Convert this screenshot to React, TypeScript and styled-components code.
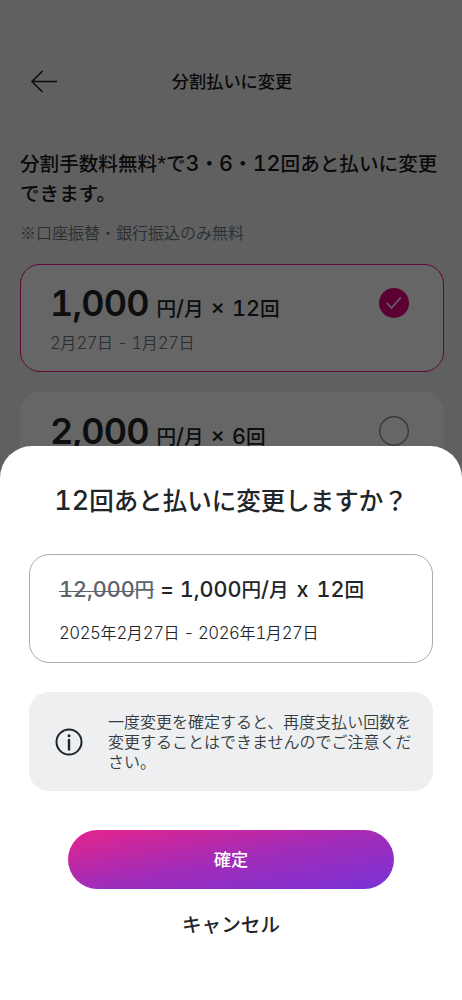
import React from "react";
import styled, { createGlobalStyle } from "styled-components";

const GlobalStyle = createGlobalStyle`
  * { box-sizing: border-box; }
  body {
    margin: 0;
    font-family: "Noto Sans CJK JP", sans-serif;
    color: #212529;
    background: #f0f0f0;
  }
  h1, h2, p { margin: 0; }
  button { font-family: inherit; border: 0; padding: 0; background: none; cursor: pointer; }
`;

const Screen = styled.div`
  position: relative;
  width: 462px;
  height: 1000px;
  overflow: hidden;
  background: #f0f0f0;
`;

const Latin = styled.span<{ $light?: boolean }>`
  font-family: Inter, sans-serif;
  font-size: ${(p) => (p.$light ? "1.05em" : "1.1em")};
  font-weight: ${(p) => (p.$light ? 350 : 550)};
  letter-spacing: ${(p) => (p.$light ? "-0.5px" : "0")};
  line-height: 1;
  font-variant-numeric: tabular-nums;
`;

const Header = styled.header`
  display: grid;
  grid-template-columns: 30px 1fr 28px;
  align-items: center;
  height: 58px;
  margin-top: 52px;
  padding: 0 29px;
`;

const BackButton = styled.button`
  display: flex;
`;

const ScreenTitle = styled.h1`
  padding-bottom: 1px;
  text-align: center;
  font-size: 17.2px;
  font-weight: 500;
  line-height: 24px;
  color: #1a1a1a;
`;

const Content = styled.main`
  padding: 38px 18.5px 0 20px;
`;

const Heading = styled.h2`
  font-size: 19.6px;
  line-height: 30px;
  font-weight: 500;
  color: #1a1a1a;
  white-space: nowrap;
`;

const Asterisk = styled.span`
  font-family: "Liberation Sans", sans-serif;
  font-size: 1.15em;
  line-height: 1;
`;

const Note = styled.p`
  margin-top: 12px;
  font-size: 16px;
  line-height: 24px;
  font-weight: 350;
  color: #6c757d;
`;

const PlanList = styled.div`
  display: flex;
  flex-direction: column;
  gap: 20px;
  margin-top: 20px;
`;

const PlanCard = styled.div<{ $selected?: boolean }>`
  display: flex;
  justify-content: space-between;
  align-items: flex-start;
  height: 108px;
  padding: 20px 33.5px 0 29px;
  border: 1px solid ${(p) => (p.$selected ? "#e8148a" : "#fff")};
  border-radius: 20px;
  background: #fff;
`;

const PlanPrice = styled.div`
  display: flex;
  align-items: baseline;
  height: 40px;
  line-height: 40px;
  white-space: nowrap;
`;

const Amount = styled.span`
  width: 106.5px;
  font-family: Inter, sans-serif;
  font-variant-numeric: tabular-nums;
  font-size: 36px;
  font-weight: 580;
  letter-spacing: -0.8px;
  line-height: 36px;
`;

const Unit = styled.span`
  font-size: 19.6px;
  font-weight: 500;
  word-spacing: 1.4px;
`;

const Period = styled.p`
  margin-top: 5px;
  font-size: 16px;
  line-height: 24px;
  font-weight: 350;
  color: #6c757d;
`;

const Radio = styled.span<{ $selected?: boolean }>`
  display: flex;
  align-items: center;
  justify-content: center;
  width: 30px;
  height: 30px;
  margin-top: 3px;
  border-radius: 50%;
  box-shadow: ${(p) => (p.$selected ? "none" : "inset 0 0 0 1.4px #868e96")};
  background: ${(p) => (p.$selected ? "#e60082" : "transparent")};
`;

const Overlay = styled.div`
  position: absolute;
  inset: 0;
  display: flex;
  flex-direction: column;
  justify-content: flex-end;
  background: rgba(0, 0, 0, 0.6);
`;

const Sheet = styled.section`
  display: flex;
  flex-direction: column;
  align-items: center;
  height: 554px;
  padding: 36px 29px 0;
  border-radius: 32px 32px 0 0;
  background: #fff;
`;

const SheetTitle = styled.h2`
  font-size: 24.5px;
  line-height: 36px;
  font-weight: 500;
  white-space: nowrap;
`;

const Summary = styled.div`
  width: 404px;
  height: 109px;
  margin-top: 36px;
  padding: 19px 29px 0;
  border: 1px solid #a5adb3;
  border-radius: 20px;
  white-space: nowrap;
`;

const SummaryPrice = styled.p`
  font-size: 19.6px;
  line-height: 30px;
  font-weight: 500;
`;

const OldPrice = styled.s`
  color: #5c656d;
  text-decoration-thickness: 1px;
`;

const Rate = styled.span`
  word-spacing: 2.2px;
`;

const SummaryPeriod = styled.p`
  margin-top: 16px;
  font-size: 16px;
  line-height: 24px;
  font-weight: 350;
`;

const Notice = styled.div`
  display: flex;
  align-items: center;
  gap: 25.5px;
  width: 404px;
  height: 99px;
  margin-top: 29px;
  padding-left: 25.5px;
  border-radius: 20px;
  background: #edeff1;
`;

const NoticeText = styled.p`
  width: 308px;
  padding-bottom: 1px;
  font-size: 16px;
  line-height: 20px;
  font-weight: 350;
  color: #343a40;
`;

const ConfirmButton = styled.button`
  width: 326px;
  height: 59px;
  margin-top: 39px;
  padding-bottom: 2px;
  border-radius: 30px;
  background: linear-gradient(to bottom right, #e6248b, #a22cb8 50%, #7832d6);
  color: #fff;
  font-size: 17.2px;
  font-weight: 500;
`;

const CancelButton = styled.button`
  margin-top: 20px;
  font-size: 19.6px;
  line-height: 30px;
  font-weight: 500;
  color: #212529;
`;

/* Sets digits and Latin signs in their own face, next to the Japanese text. */
function Mixed({ text, light }: { text: string; light?: boolean }) {
  return (
    <>
      {text.split(/([\d,/×x=\- ]+)/).map((part, i) =>
        i % 2 ? <Latin key={i} $light={light}>{part}</Latin> : part
      )}
    </>
  );
}

function BackArrow() {
  return (
    <svg width="30" height="24" viewBox="0 0 30 24" fill="none" stroke="#1a1a1a" strokeWidth="1.5">
      <path d="M28 12.5H3M13.5 2L3 12.5l10.5 10.5" />
    </svg>
  );
}

function Check() {
  return (
    <svg width="18" height="18" viewBox="0 0 18 18" fill="none" stroke="#fff" strokeWidth="1.5" strokeLinecap="round" strokeLinejoin="round">
      <path d="M2.2 9.2L6.5 14 15.5 3.8" />
    </svg>
  );
}

function InfoIcon() {
  return (
    <svg width="28" height="28" viewBox="0 0 28 28" fill="none" stroke="#212529" strokeWidth="2">
      <circle cx="14" cy="14" r="12.5" />
      <path d="M14 12v9.5" strokeWidth="2.4" strokeLinecap="round" />
      <circle cx="14" cy="7.8" r="1.5" fill="#212529" stroke="none" />
    </svg>
  );
}

const plans = [
  { amount: "1,000", count: "12", period: "2月27日 - 1月27日", selected: true },
  { amount: "2,000", count: "6", period: "2月27日 - 7月27日", selected: false },
];

export default function App() {
  return (
    <Screen>
      <GlobalStyle />
      <Header>
        <BackButton aria-label="戻る"><BackArrow /></BackButton>
        <ScreenTitle>分割払いに変更</ScreenTitle>
      </Header>
      <Content>
        <Heading>
          分割手数料無料<Asterisk>*</Asterisk><Mixed text="で3・6・12回あと払いに変更" /><br />できます。
        </Heading>
        <Note>※口座振替・銀行振込のみ無料</Note>
        <PlanList>
          {plans.map((plan) => (
            <PlanCard key={plan.amount} $selected={plan.selected}>
              <div>
                <PlanPrice>
                  <Amount>{plan.amount}</Amount>
                  <Unit><Mixed text={`円/月 × ${plan.count}回`} /></Unit>
                </PlanPrice>
                <Period><Mixed light text={plan.period} /></Period>
              </div>
              <Radio $selected={plan.selected}>{plan.selected && <Check />}</Radio>
            </PlanCard>
          ))}
        </PlanList>
      </Content>
      <Overlay>
        <Sheet>
          <SheetTitle><Mixed text="12回あと払いに変更しますか？" /></SheetTitle>
          <Summary>
            <SummaryPrice>
              <OldPrice><Mixed text="12,000円" /></OldPrice>
              <Mixed text=" = " />
              <Rate><Mixed text="1,000円/月 x 12回" /></Rate>
            </SummaryPrice>
            <SummaryPeriod><Mixed light text="2025年2月27日 - 2026年1月27日" /></SummaryPeriod>
          </Summary>
          <Notice>
            <InfoIcon />
            <NoticeText>一度変更を確定すると、再度支払い回数を変更することはできませんのでご注意ください。</NoticeText>
          </Notice>
          <ConfirmButton>確定</ConfirmButton>
          <CancelButton>キャンセル</CancelButton>
        </Sheet>
      </Overlay>
    </Screen>
  );
}
